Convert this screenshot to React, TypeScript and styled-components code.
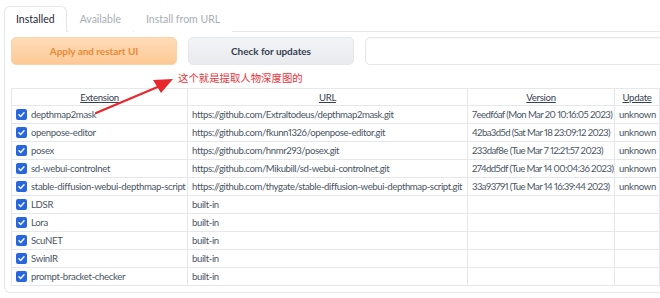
import React from "react";
import styled, { createGlobalStyle } from "styled-components";

const Global = createGlobalStyle`
  html, body { margin: 0; padding: 0; background: #fff; }
  body { font-family: Lato, "Noto Sans", sans-serif; color: #374151; }
`;

const Page = styled.div`
  position: relative;
  padding: 6px 0 0 4px;
  width: 660px;
  box-sizing: border-box;
  overflow: hidden;
`;

const TabBar = styled.div`
  display: flex;
  border-bottom: 1px solid #e5e7eb;
  height: 25px;
  width: 700px;
`;

const Tab = styled.div<{ $active?: boolean }>`
  padding: 0 11px;
  margin-right: 1px;
  font-size: 10.5px;
  line-height: 24px;
  color: ${(p) => (p.$active ? "#1f2937" : "#a8adb5")};
  background: #fff;
  border: 1px solid ${(p) => (p.$active ? "#e5e7eb" : "transparent")};
  border-bottom: none;
  border-radius: 6px 6px 0 0;
  margin-bottom: -1px;
  box-sizing: border-box;
  height: 26px;
`;

const Panel = styled.div`
  border: 1px solid #e5e7eb;
  border-top: none;
  border-radius: 0 0 6px 6px;
  padding: 5px 0 6px 6px;
  width: 700px;
  box-sizing: border-box;
`;

const ButtonRow = styled.div`
  display: grid;
  grid-template-columns: 166px 166px 330px;
  gap: 11px;
  height: 28px;
`;

const Button = styled.div<{ $primary?: boolean }>`
  display: flex;
  align-items: center;
  justify-content: center;
  border-radius: 5px;
  font-size: 10px;
  font-weight: 700;
  letter-spacing: -0.05px;
  color: ${(p) => (p.$primary ? "#ea8a37" : "#374151")};
  background: ${(p) =>
    p.$primary
      ? "linear-gradient(to bottom, #fedcb8, #fcc995)"
      : "linear-gradient(to bottom, #f3f4f6, #e9eaef)"};
  border: 1px solid ${(p) => (p.$primary ? "#fbd3a6" : "#e5e7eb")};
`;

const Input = styled.div`
  border: 1px solid #e5e7eb;
  border-radius: 5px;
  box-shadow: inset 0 1px 2px rgba(0,0,0,0.04);
`;

const NoteRow = styled.div`
  height: 23px;
  padding-left: 167px;
  display: flex;
  align-items: center;
`;

const Note = styled.span`
  font-family: "Noto Sans CJK SC", sans-serif;
  font-size: 10.4px;
  color: #e8333a;
  margin-top: 1px;
`;

const Table = styled.table`
  border-collapse: collapse;
  font-size: 9.6px;
  font-variant-numeric: proportional-nums;
  color: #4b5563;
  table-layout: fixed;
  width: 648px;
`;

const Th = styled.th<{ $w: number }>`
  width: ${(p) => p.$w}px;
  font-weight: 400;
  letter-spacing: -0.3px;
  text-decoration: underline;
  color: #374151;
  border: 1px solid #e5e7eb;
  height: 17px;
  padding: 0;
  box-sizing: border-box;
  text-align: center;
`;

const Td = styled.td<{ $ls?: number }>`
  border: 1px solid #e5e7eb;
  height: 18px;
  padding: 0 4px;
  white-space: nowrap;
  overflow: hidden;
  box-sizing: border-box;
  letter-spacing: ${(p) => p.$ls ?? -0.3}px;
`;

const ExtCell = styled.div`
  display: flex;
  align-items: center;
  gap: 4px;
`;

const Check = styled.span`
  width: 11px;
  height: 11px;
  border-radius: 2px;
  background: #2866e0;
  display: inline-flex;
  align-items: center;
  justify-content: center;
  flex: none;
`;

const Arrow = styled.svg`
  position: absolute;
  left: 0;
  top: 0;
  pointer-events: none;
`;

const rows: [string, string, string, string][] = [
  ["depthmap2mask", "https://github.com/Extraltodeus/depthmap2mask.git", "7eedf6af (Mon Mar 20 10:16:05 2023)", "unknown"],
  ["openpose-editor", "https://github.com/fkunn1326/openpose-editor.git", "42ba3d5d (Sat Mar 18 23:09:12 2023)", "unknown"],
  ["posex", "https://github.com/hnmr293/posex.git", "233daf8e (Tue Mar 7 12:21:57 2023)", "unknown"],
  ["sd-webui-controlnet", "https://github.com/Mikubill/sd-webui-controlnet.git", "274dd5df (Tue Mar 14 00:04:36 2023)", "unknown"],
  ["stable-diffusion-webui-depthmap-script", "https://github.com/thygate/stable-diffusion-webui-depthmap-script.git", "33a93791 (Tue Mar 14 16:39:44 2023)", "unknown"],
  ["LDSR", "built-in", "", ""],
  ["Lora", "built-in", "", ""],
  ["ScuNET", "built-in", "", ""],
  ["SwinIR", "built-in", "", ""],
  ["prompt-bracket-checker", "built-in", "", ""],
];

export default function App() {
  return (
    <>
      <Global />
      <Page>
        <TabBar>
          <Tab $active>Installed</Tab>
          <Tab>Available</Tab>
          <Tab>Install from URL</Tab>
        </TabBar>
        <Panel>
          <ButtonRow>
            <Button $primary>Apply and restart UI</Button>
            <Button>Check for updates</Button>
            <Input />
          </ButtonRow>
          <NoteRow>
            <Note>这个就是提取人物深度图的</Note>
          </NoteRow>
          <Table>
            <thead>
              <tr>
                <Th $w={176}>Extension</Th>
                <Th $w={280}>URL</Th>
                <Th $w={147}>Version</Th>
                <Th $w={45}>Update</Th>
              </tr>
            </thead>
            <tbody>
              {rows.map((r) => (
                <tr key={r[0]}>
                  <Td $ls={-0.35}>
                    <ExtCell>
                      <Check>
                        <svg width="9" height="9" viewBox="0 0 16 16">
                          <path d="M3.5 8.5l3 3 6-6.5" stroke="#fff" strokeWidth="2.4" fill="none" strokeLinecap="round" strokeLinejoin="round" />
                        </svg>
                      </Check>
                      {r[0]}
                    </ExtCell>
                  </Td>
                  <Td $ls={-0.4}>{r[1]}</Td>
                  <Td $ls={-0.6}>{r[2]}</Td>
                  <Td>{r[3]}</Td>
                </tr>
              ))}
            </tbody>
          </Table>
        </Panel>
        <Arrow width="660" height="298" viewBox="0 0 660 298">
          <path d="M96 113 L160 86" stroke="#e8262b" strokeWidth="2.2" strokeLinecap="round" />
          <path d="M173 79 L153 80 L161 93 Z" fill="#e8262b" />
        </Arrow>
      </Page>
    </>
  );
}
